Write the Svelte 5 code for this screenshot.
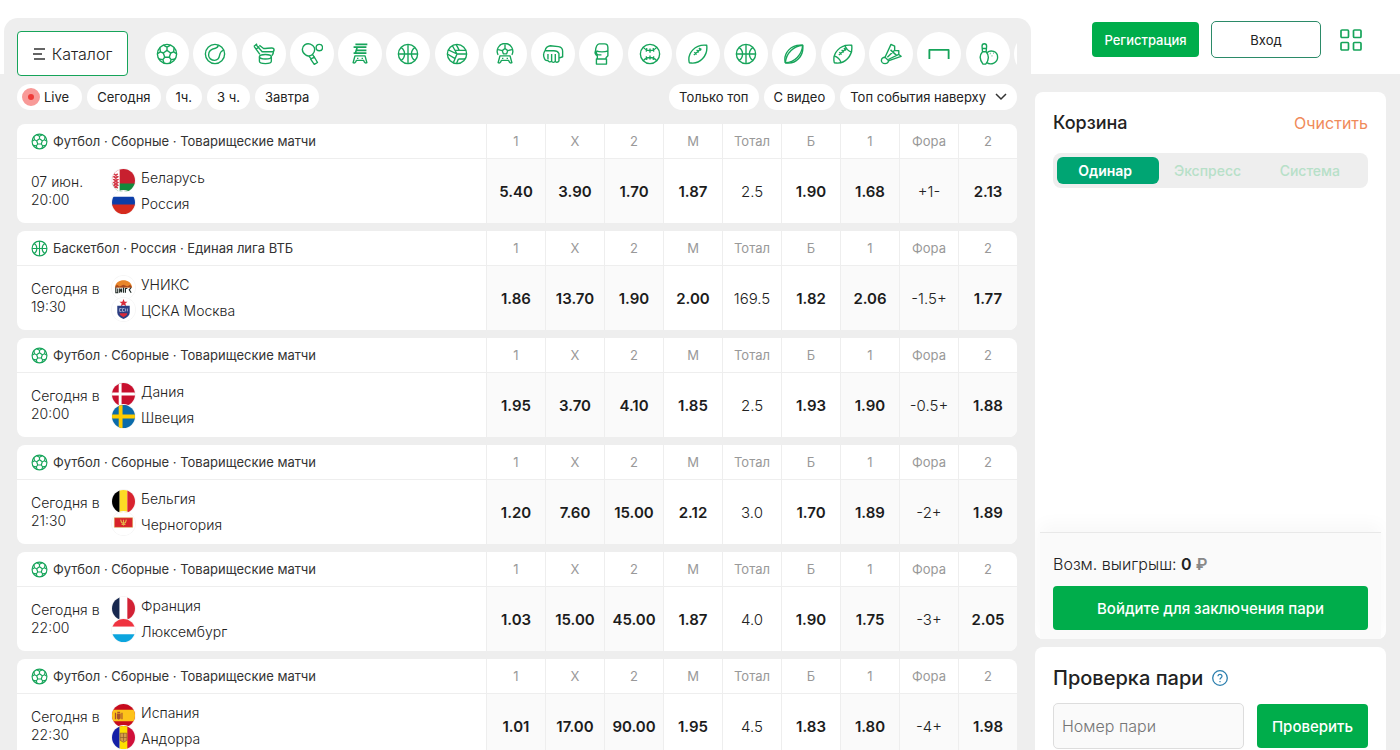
<script>
  const ball = '<circle cx="12" cy="12" r="10.500"/>';
  const pad = '<path d="M6.500 14h11l2 7.500c-1.500.8-2.700 0-3.500-2.500H8c-.8 2.500-2 3.300-3.500 2.500z"/><path d="M9.500 16v1.500M14.500 16v1.500"/>';
  const leaf = '<path d="M2.500 21.500C0 11 9 1 21.500 2.500 23 14 14 24 2.500 21.500z"/>';
  const stitches = '<path d="M7.500 13l8-7M8 10l2.500 2.500M10.500 7.500l2.500 2.500M13 5.500l2.500 2.500"/>';

  const icons = {
    football: ball + '<path d="M12 8l4 2.900-1.500 4.600h-5L8 10.900z"/><path d="M12 8V4.500M16 10.900l3.200-1.300M14.500 15.500l2 2.600M9.500 15.500l-2 2.600M8 10.900L4.800 9.600M8 2.300l4 2.200 4-2.200M22.300 11.500l-3.100-1.900.6-4.600M4.800 9.600l-3.100 1.900M4.800 9.600L4.200 5M16.500 18.100l-1.200 3.800M16.500 18.100l4.500-.6M7.500 18.100l1.200 3.800M7.500 18.100L3 17.500"/>',
    tennis: ball + '<path d="M15.500 2.300c0 2-1 3-3 3.400C8 6.500 5 9.500 5 13c0 3.500 3 6 6.500 6 3.500-.3 5-2.500 5.500-5.500.5-3 1.500-5 4.500-5.500"/>',
    hockey: '<path d="M3 1.500l7 8h10.500c3.300 0 3.300-4 0-4-3 0-6 .5-9 .5L7 2.500M1 3.500l3.500-2.500M1 3.500l6.500 9M3.500 6.500L7 4M22.500 8c0 3-1 5-2 6"/><ellipse cx="13.500" cy="15" rx="6.500" ry="2.500"/><path d="M7 15v5c0 3.300 13 3.300 13 0v-5"/>',
    pingpong: '<path d="M5 13C.5 10 .5 4.500 4 2c4-2.500 9-.5 10.500 3 1 3 0 5.500-2 7.500l2 3M5 13c2 1.500 5 1.500 7.500-.5M5 13c3 .5 4.500 2 6 4"/><path d="M10.500 17.500l4-2.200 3.500 6-3.500 2z"/><circle cx="20" cy="5" r="3.500"/>',
    esports: '<path d="M7 1.500h13M5 4.500h14M8 8h11M5 11h14M9 4.500L7 11" stroke-width="1.800"/>' + pad,
    basketball: ball + '<path d="M12 1.500v21M1.500 12h21M4.500 5c5 3 5 11 0 14M19.500 5c-5 3-5 11 0 14"/>',
    volleyball: ball + '<path d="M12 12L2.500 7.500M12 12L8 21.500M12 12h10.500M7 3l5 9M1.500 12l8.500 5M11 1.500L14.500 8H22M13.500 17.500H21M13.500 17.500l-2 5M14.500 8h-4.500"/>',
    cyberball: '<path d="M4.500 13A8.500 8.500 0 1 1 19.500 13M12 6l3 2.300-1.200 3.500h-3.600L9 8.300zM12 6V1.500M15 8.300l4.500-1M9 8.300l-4.500-1"/>' + pad,
    mma: '<path d="M3.500 8C4 5 6 3.500 9 3l9 1c3 .5 4.500 2 4.500 5v6l-4 1.500v3c-1 2-3.500 2-4 .3-1 1.700-3.300 1.700-4 .2-1.500 1.200-3.500.5-4-.8-2 .3-3.500-.7-4-2.700C1 13 2 10 3.500 8zM6.500 18v-6M10.500 20v-8M14.500 20v-8M4 8.500h9c3 0 4.500 1 5.500 3v5"/>',
    boxing: '<path d="M8 17.500V14c-2.500-1-3-3.500-2-5.500C6.500 3 7.500 1.500 10 1h6c3 0 3.500 2 3.500 4v9l-2 2v1.500M7 17.500h11v5.500H7zM8 9c-1.500 0-1.500 4 1.500 4h3M7 8.500c3 1.500 9 1.500 12.500 0"/>',
    baseball: ball + '<path d="M4.500 4.500c4 5 11 5 15 0M4.500 19.500c4-5 11-5 15 0M8.500 5.500l-.6 4M12 6v4.500M15.500 5.500l.6 4M8.500 18.500l-.6-4M12 18v-4.500M15.500 18.500l.6-4"/>',
    rugby: leaf + stitches,
    oval: leaf + '<path d="M2.500 21.500C3.500 11 12 3 21.500 2.500M21.500 2.500C20.500 13 13 21 2.500 21.500"/>',
    american: leaf + stitches + '<path d="M2 14c4 1 7 4 8 8M14 2c1 4 4 7 8 8"/>',
    badminton: '<path d="M5.500 15.500L12 1.500l4 2V8l4.500.5v4l2.500 2-14 5M8 15.500L16 8M9 18l11.500-5.500M11.500 7.500l6.500 6"/><path d="M5.500 15.500l4 4c-.5 1.500-2 3-4 3-2.500 0-4-2-4-3.500 0-2 2-3.500 4-3.500z"/>',
    snooker: '<path d="M1.500 17.500V7.500h21v10" stroke-width="2"/>',
    bowling: '<path d="M6 9.500L5.500 3.500c0-3.500 5-3.500 5 0L10 9.500c4 5 3 9-.5 13.500h-3C3 18.500 2 14 6 9.500zM6 9.500h4M6 6h4"/><path d="M11 10.500c4-3.500 11.500-1.500 11.500 5 0 6-7 9-12 6"/><path d="M14 11.500h.7M17.500 11h.7M16 14h.7"/>'
  };

  const sports = ['football', 'tennis', 'hockey', 'pingpong', 'esports', 'basketball', 'volleyball', 'cyberball', 'mma', 'boxing', 'baseball', 'rugby', 'basketball', 'oval', 'american', 'badminton', 'snooker', 'bowling', 'football'];

  const flags = {
    by: '<path fill="#c8202f" d="M0 0h24v16H0z"/><path fill="#138a3c" d="M0 15h24v9H0z"/><path fill="#fff" d="M0 0h8v24H0z"/><path stroke="#d33a48" stroke-width="1.600" fill="none" d="M2 5l4 3-4 3 4 3-4 3 4 3M6 5L2 8l4 3-4 3 4 3-4 3"/>',
    ru: '<path fill="#fff" d="M0 0h24v7H0z"/><path fill="#0c3ea8" d="M0 6h24v9H0z"/><path fill="#d52b1e" d="M0 14h24v10H0z"/>',
    unics: '<path fill="#fff" d="M0 0h24v24H0z"/><path fill="#e8852a" d="M3 12C4 2 20 2 21 12z"/><path fill="#a8481c" d="M3 12l2-3 3 2 4-2 4 2 3-2 2 3z"/><path fill="none" stroke="#222c28" stroke-width="1.200" d="M4 12v5.500h2V13M8 17.500V13l2 4v-4M12 12v5.500M14 17.500V13h2M20 12l-2 2.500 2 3"/>',
    cska: '<path fill="#fff" d="M0 0h24v24H0z"/><path fill="#d92b3a" d="M12 1l1.200 2.800h3L13.900 5.700l1 3L12 7 9.100 8.700l1-3-2.300-1.900h3z"/><path fill="#2c3f83" d="M5.500 8h13v7c0 3-2.500 5-6.500 7-4-2-6.500-4-6.500-7z"/><path fill="#d92b3a" d="M8 16h8c0 2-2 3-4 4-2-1-4-2-4-4z"/><path fill="none" stroke="#c8cfe8" stroke-width=".8" d="M10 11H8v3h2M13 11h-2v3h2M14 11v3M16 11v3"/>',
    dk: '<path fill="#c8102e" d="M0 0h24v24H0z"/><path fill="#fff" d="M7 0h3v24H7zM0 10h24v3H0z"/>',
    se: '<path fill="#0b6baa" d="M0 0h24v24H0z"/><path fill="#fecb00" d="M7 0h4v24H7zM0 10h24v4H0z"/>',
    be: '<path d="M0 0h8v24H0z"/><path fill="#fdda25" d="M8 0h8v24H8z"/><path fill="#d8232f" d="M16 0h8v24h-8z"/>',
    me: '<path fill="#fff" d="M0 0h24v24H0z"/><path fill="#d8222b" stroke="#d6a83c" stroke-width=".5" d="M2.500 6h19v10h-19z"/><path fill="none" stroke="#e4b44a" stroke-width="1.200" d="M9 8l1 3 2 1 2-1 1-3M12 8v6M10 13h4"/>',
    fr: '<path fill="#17284f" d="M0 0h8v24H0z"/><path fill="#fff" d="M8 0h8v24H8z"/><path fill="#d22235" d="M16 0h8v24h-8z"/>',
    lu: '<path fill="#ef3340" d="M0 0h24v8H0z"/><path fill="#fff" d="M0 8h24v8H0z"/><path fill="#0ca5de" d="M0 16h24v8H0z"/>',
    es: '<path fill="#c60b1e" d="M0 0h24v24H0z"/><path fill="#fdc31a" d="M0 6h24v12H0z"/><path fill="#a8502d" d="M3 9h1.200v7H3zM5 10h4v5l-2 1.500L5 15zM9.800 9H11v7H9.800zM5.500 8h3v1.500h-3z"/>',
    ad: '<path fill="#1520a6" d="M0 0h8v24H0z"/><path fill="#fddf00" d="M8 0h9v24H8z"/><path fill="#d0103a" d="M16 0h8v24h-8z"/><path fill="#d59a4a" stroke="#8a5a2c" stroke-width=".7" d="M8.500 7.500h7V15L12 17l-3.500-2zM12 7.500V16M8.500 12h7"/>'
  };

  const columns = ['1', 'X', '2', 'М', 'Тотал', 'Б', '1', 'Фора', '2'];
  const friendly = 'Футбол · Сборные · Товарищеские матчи';

  const matches = [
    { sport: 'football', league: friendly, day: '07 июн.', time: '20:00', teams: [['by', 'Беларусь'], ['ru', 'Россия']], odds: ['5.40', '3.90', '1.70', '1.87', '2.5', '1.90', '1.68', '+1-', '2.13'] },
    { sport: 'basketball', league: 'Баскетбол · Россия · Единая лига ВТБ', day: 'Сегодня в', time: '19:30', teams: [['unics', 'УНИКС'], ['cska', 'ЦСКА Москва']], odds: ['1.86', '13.70', '1.90', '2.00', '169.5', '1.82', '2.06', '-1.5+', '1.77'] },
    { sport: 'football', league: friendly, day: 'Сегодня в', time: '20:00', teams: [['dk', 'Дания'], ['se', 'Швеция']], odds: ['1.95', '3.70', '4.10', '1.85', '2.5', '1.93', '1.90', '-0.5+', '1.88'] },
    { sport: 'football', league: friendly, day: 'Сегодня в', time: '21:30', teams: [['be', 'Бельгия'], ['me', 'Черногория']], odds: ['1.20', '7.60', '15.00', '2.12', '3.0', '1.70', '1.89', '-2+', '1.89'] },
    { sport: 'football', league: friendly, day: 'Сегодня в', time: '22:00', teams: [['fr', 'Франция'], ['lu', 'Люксембург']], odds: ['1.03', '15.00', '45.00', '1.87', '4.0', '1.90', '1.75', '-3+', '2.05'] },
    { sport: 'football', league: friendly, day: 'Сегодня в', time: '22:30', teams: [['es', 'Испания'], ['ad', 'Андорра']], odds: ['1.01', '17.00', '90.00', '1.95', '4.5', '1.83', '1.80', '-4+', '1.98'] }
  ];

  const tabs = ['Одинар', 'Экспресс', 'Система'];
  let activeTab = $state('Одинар');
</script>

{#snippet sportIcon(name)}
  <svg class="sport-icon" viewBox="0 0 24 24" aria-hidden="true">{@html icons[name]}</svg>
{/snippet}

<div class="page">
  <main>
    <nav class="sports">
      <button class="catalog">
        <svg width="12" height="14" viewBox="0 0 12 14" aria-hidden="true">
          <path d="M1 2h11M0 7h9M1 12h11" stroke="#333" stroke-width="1.500" />
        </svg>
        Каталог
      </button>
      <ul>
        {#each sports as sport}
          <li><button class="sport" aria-label={sport}>{@render sportIcon(sport)}</button></li>
        {/each}
      </ul>
    </nav>

    <div class="filters">
      <button class="chip live"><span class="dot"></span>Live</button>
      <button class="chip">Сегодня</button>
      <button class="chip">1ч.</button>
      <button class="chip">3 ч.</button>
      <button class="chip">Завтра</button>
      <button class="chip push">Только топ</button>
      <button class="chip">С видео</button>
      <button class="chip">
        Топ события наверху
        <svg class="chevron" width="12" height="8" viewBox="0 0 12 8" aria-hidden="true">
          <path d="M1 1l5 5 5-5" fill="none" stroke="#333" stroke-width="1.500" />
        </svg>
      </button>
    </div>

    {#each matches as match}
      <section class="match">
        <table>
          <thead>
            <tr>
              <th class="league">
                <div class="league-name">{@render sportIcon(match.sport)}{match.league}</div>
              </th>
              {#each columns as column}
                <th class="column">{column}</th>
              {/each}
            </tr>
          </thead>
          <tbody>
            <tr>
              <td>
                <div class="event">
                  <div class="when">{match.day}<br />{match.time}</div>
                  <div class="flags">
                    {#each match.teams as [flag]}
                      <svg class="flag" viewBox="0 0 24 24" aria-hidden="true">{@html flags[flag]}</svg>
                    {/each}
                  </div>
                  <div class="teams">
                    {#each match.teams as [, name]}
                      <span>{name}</span>
                    {/each}
                  </div>
                </div>
              </td>
              {#each match.odds as value, i}
                <td class="odd" class:shaded={i < 3 || i > 5}>
                  {#if i === 4 || i === 7}
                    {value}
                  {:else}
                    <button>{value}</button>
                  {/if}
                </td>
              {/each}
            </tr>
          </tbody>
        </table>
      </section>
    {/each}
  </main>

  <aside>
    <header>
      <button class="register">Регистрация</button>
      <button class="login">Вход</button>
      <button class="apps" aria-label="Меню">
        <svg width="22" height="22" viewBox="0 0 22 22" fill="none" stroke="#16a45a" stroke-width="1.700" aria-hidden="true">
          <rect x="1" y="1" width="7.500" height="7.500" rx="1" />
          <rect x="13.500" y="1" width="7.500" height="7.500" rx="1" />
          <rect x="1" y="13.500" width="7.500" height="7.500" rx="1" />
          <rect x="13.500" y="13.500" width="7.500" height="7.500" rx="1" />
        </svg>
      </button>
    </header>

    <section class="basket">
      <div class="basket-head">
        <h2>Корзина</h2>
        <button class="clear">Очистить</button>
      </div>
      <div class="tabs">
        {#each tabs as tab}
          <button class:active={activeTab === tab} onclick={() => (activeTab = tab)}>{tab}</button>
        {/each}
      </div>
      <div class="basket-foot">
        <p>Возм. выигрыш: <b>0 <span>₽</span></b></p>
        <button class="primary">Войдите для заключения пари</button>
      </div>
    </section>

    <section class="check">
      <h2>
        Проверка пари
        <svg width="16" height="16" viewBox="0 0 16 16" fill="none" stroke="#2b7fae" aria-hidden="true">
          <circle cx="8" cy="8" r="7.300" stroke-width="1.300" />
          <path d="M6 6.300c0-2.700 4-2.700 4 0C10 7.700 8 7.700 8 9.500M8 11v1.200" stroke-width="1.200" />
        </svg>
      </h2>
      <form>
        <input placeholder="Номер пари" aria-label="Номер пари" />
        <button type="button" class="primary">Проверить</button>
      </form>
    </section>
  </aside>
</div>

<style>
  :global(body) {
    margin: 0;
    background: #fff;
  }

  .page {
    display: grid;
    grid-template-columns: minmax(0, 1fr) 351px;
    gap: 4px;
    box-sizing: border-box;
    height: 100vh;
    overflow: hidden;
    padding: 0 14px 0 4px;
    background: linear-gradient(#fff 74px, #eee 74px);
    font-family: Inter, 'Liberation Sans', sans-serif;
    font-size: 14px;
    font-weight: 300;
    color: #222;
  }

  button {
    border: none;
    padding: 0;
    background: none;
    font: inherit;
    color: inherit;
    cursor: pointer;
  }

  main {
    margin-top: 18px;
    padding: 13px 14px 0 13px;
    border-radius: 14px 14px 0 0;
    background: #eee;
  }

  .sports {
    display: flex;
    align-items: center;
    gap: 17px;
  }

  .catalog {
    display: flex;
    flex: none;
    align-items: center;
    justify-content: center;
    gap: 7px;
    box-sizing: border-box;
    width: 111px;
    height: 45px;
    border: 1px solid #16a45a;
    border-radius: 4px;
    background: #fff;
    font-size: 16px;
  }

  .sports ul {
    display: grid;
    flex: 1;
    grid-auto-flow: column;
    grid-auto-columns: calc(100% / 18);
    margin: 0;
    padding: 0 3px 0 0;
    overflow: hidden;
    list-style: none;
  }

  .sport {
    display: flex;
    align-items: center;
    justify-content: center;
    width: 44px;
    height: 44px;
    border-radius: 50%;
    background: #fff;
  }

  .sport-icon {
    flex: none;
    width: 22px;
    height: 22px;
    fill: none;
    stroke: #16a45a;
    stroke-width: 1.5;
    stroke-linejoin: round;
  }

  .filters {
    display: flex;
    gap: 5px;
    margin: 8px 0 14px;
  }

  .chip {
    display: flex;
    align-items: center;
    height: 26px;
    padding: 0 10px;
    border-radius: 13px;
    background: #fff;
    font-size: 13px;
    font-weight: 400;
    white-space: nowrap;
  }

  .live {
    gap: 4px;
    padding: 0 13px 0 5px;
  }

  .dot {
    width: 6px;
    height: 6px;
    border: 6px solid #f89a98;
    border-radius: 50%;
    background: #ee3b38;
  }

  .push {
    margin-left: auto;
  }

  .chevron {
    margin-left: 9px;
  }

  .match {
    margin-bottom: 8px;
    border-radius: 8px;
    overflow: hidden;
    background: #fff;
  }

  table {
    width: 100%;
    border-collapse: separate;
    border-spacing: 0;
    table-layout: fixed;
  }

  th,
  td {
    padding: 0;
    font-weight: 300;
  }

  th {
    height: 34px;
    border-bottom: 1px solid #eee;
    font-size: 13px;
    font-weight: 400;
  }

  td {
    height: 64px;
  }

  .league-name {
    display: flex;
    align-items: center;
    gap: 5px;
    padding-left: 14px;
    color: #333;
  }

  .league .sport-icon {
    width: 17px;
    height: 17px;
    stroke-width: 1.6;
  }

  .column {
    width: 58px;
    border-left: 1px solid #eee;
    color: #999;
  }

  .event {
    display: flex;
    align-items: center;
    padding-left: 14px;
  }

  .when {
    width: 81px;
    line-height: 18px;
  }

  .flags {
    display: flex;
    flex-direction: column;
  }

  .flag {
    width: 23px;
    height: 23px;
    border-radius: 50%;
    box-shadow: 0 0 0 1px #f6f6f6;
  }

  .flag + .flag {
    margin-top: -1px;
  }

  .teams {
    display: flex;
    flex-direction: column;
    margin-left: 6px;
    line-height: 26px;
  }

  .odd {
    border-left: 1px solid #eee;
    text-align: center;
    font-size: 15px;
  }

  .odd button {
    width: 100%;
    height: 100%;
    font-weight: 600;
    color: #1c1c1c;
  }

  .shaded {
    background: #fafafa;
  }

  aside {
    display: flex;
    flex-direction: column;
    gap: 8px;
  }

  header {
    display: flex;
    align-items: center;
    justify-content: flex-end;
    gap: 12px;
    height: 79px;
    margin-bottom: 5px;
    padding: 0 24px 0 0;
    box-sizing: border-box;
  }

  .register {
    width: 107px;
    height: 35px;
    border-radius: 4px;
    background: #00ad4b;
    font-size: 13px;
    font-weight: 500;
    color: #fff;
  }

  .login {
    width: 110px;
    height: 37px;
    border: 1px solid #2b8a68;
    border-radius: 5px;
    font-size: 13px;
    font-weight: 400;
  }

  .apps {
    height: 22px;
    margin-left: 7px;
  }

  .basket {
    display: flex;
    flex-direction: column;
    min-height: 547px;
    border-radius: 8px;
    overflow: hidden;
    background: #fff;
  }

  .basket-head {
    display: flex;
    align-items: center;
    justify-content: space-between;
    padding: 19px 18px 0;
    line-height: 24px;
    font-size: 16px;
  }

  h2 {
    margin: 0;
    font-size: 18px;
    font-weight: 500;
    color: #222;
  }

  .clear {
    font-weight: 400;
    color: #f08a5a;
  }

  .tabs {
    display: flex;
    margin: 18px 18px 0;
    padding: 4px;
    border-radius: 8px;
    background: #eee;
  }

  .tabs button {
    flex: 1;
    height: 27px;
    padding-right: 6px;
    border-radius: 6px;
    font-weight: 500;
    color: #b7e0c8;
  }

  .tabs .active {
    background: #00a573;
    font-weight: 600;
    color: #fff;
  }

  .basket-foot {
    margin: auto 5px 0;
    padding: 19px 13px 9px;
    border-top: 1px solid #e8e8e8;
    background: #fafafa;
    box-shadow: 0 -8px 16px rgba(0, 0, 0, 0.03);
  }

  .basket-foot p {
    margin: 0 0 10px;
    font-size: 16px;
    line-height: 24px;
  }

  .basket-foot b {
    font-weight: 600;
    color: #222;
  }

  .basket-foot b span {
    color: #888;
  }

  .primary {
    height: 44px;
    border-radius: 4px;
    background: #00ad4b;
    font-size: 15px;
    font-weight: 500;
    color: #fff;
  }

  .basket-foot .primary {
    width: 100%;
  }

  .check {
    padding: 18px 18px 16px;
    border-radius: 8px;
    background: #fff;
  }

  .check h2 {
    display: flex;
    align-items: center;
    gap: 9px;
    font-size: 20px;
    line-height: 26px;
  }

  .check form {
    display: flex;
    align-items: center;
    gap: 13px;
    margin-top: 12px;
  }

  .check input {
    flex: 1;
    min-width: 0;
    height: 46px;
    box-sizing: border-box;
    padding: 0 8px;
    border: 1px solid #ddd;
    border-radius: 5px;
    background: #fafafa;
    font: inherit;
    font-size: 16px;
  }

  .check .primary {
    width: 111px;
  }
</style>
